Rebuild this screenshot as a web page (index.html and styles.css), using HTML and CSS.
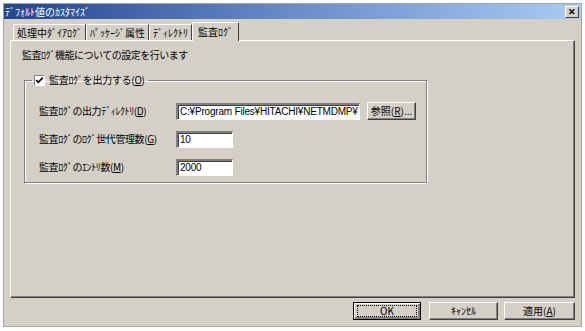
FILE: index.html
```html
<!DOCTYPE html>
<html lang="ja">
<head>
<meta charset="utf-8"/>
<title>ﾃﾞﾌｫﾙﾄ値のｶｽﾀﾏｲｽﾞ</title>
<link rel="stylesheet" href="styles.css">
</head>
<body>
<div class="window">
    <div class="titlebar">
        <span class="title">ﾃﾞﾌｫﾙﾄ値のｶｽﾀﾏｲｽﾞ</span>
        <span class="close">&#x2715;</span>
    </div>

    <div class="content">
        <div class="tabs">
            <div class="tab">処理中ﾀﾞｲｱﾛｸﾞ</div>
            <div class="tab">ﾊﾟｯｹｰｼﾞ属性</div>
            <div class="tab">ﾃﾞｨﾚｸﾄﾘ</div>
            <div class="tab active">監査ﾛｸﾞ</div>
        </div>

        <div class="panel">
            <div class="desc">監査ﾛｸﾞ機能についての設定を行います</div>

            <fieldset class="group">
                <legend>
                    <span class="check">
                        <svg width="9" height="9" viewBox="0 0 9 9"><path d="M1.2 4 L3.3 6.3 L7.8 1.6" stroke="#000" stroke-width="1.7" fill="none"/></svg>
                    </span>
                    <span class="legend-text">監査ﾛｸﾞを出力する(<u>O</u>)</span>
                </legend>
                <div class="rows">
                    <label>監査ﾛｸﾞの出力ﾃﾞｨﾚｸﾄﾘ(<u>D</u>)</label>
                    <div class="field">
                        <input class="input wide" type="text" value="C:¥Program Files¥HITACHI¥NETMDMP¥Audit" readonly>
                        <span class="btn browse">参照(<u>R</u>)...</span>
                    </div>

                    <label>監査ﾛｸﾞのﾛｸﾞ世代管理数(<u>G</u>)</label>
                    <div class="field"><input class="input short" type="text" value="10" readonly></div>

                    <label>監査ﾛｸﾞのｴﾝﾄﾘ数(<u>M</u>)</label>
                    <div class="field"><input class="input short" type="text" value="2000" readonly></div>
                </div>
            </fieldset>
        </div>

        <div class="buttons">
            <span class="btn default"><span class="focus">OK</span></span>
            <span class="btn cancel">ｷｬﾝｾﾙ</span>
            <span class="btn apply">適用(<u>A</u>)</span>
        </div>
    </div>
</div>
</body>
</html>
```

FILE: styles.css
```css
body {
    margin: 0;
    background: #fff;
    font-family: "Noto Sans CJK JP", "Liberation Sans", sans-serif;
    font-size: 10px;
    line-height: 12px;
    color: #000;
}
.window {
    margin: 3px;
    width: 577px;
    height: 322px;
    border: 1px solid #a8a49c;
    background: #d4d0c8;
    display: flex;
    flex-direction: column;
}
.titlebar {
    height: 15px;
    display: flex;
    align-items: center;
    justify-content: space-between;
    background: linear-gradient(to right, #24448c, #6a8cc8 50%, #a8ccf2);
    padding: 0 2px 0 1px;
}
.title {
    color: #fff;
    font-size: 10px;
}
.close {
    width: 12px;
    height: 10px;
    background: #d4d0c8;
    border-top: 1px solid #fff;
    border-left: 1px solid #fff;
    border-right: 1px solid #404040;
    border-bottom: 1px solid #404040;
    font-size: 9px;
    line-height: 10px;
    font-weight: bold;
    text-align: center;
}
.content {
    padding: 3px 6px 0 6px;
    display: flex;
    flex-direction: column;
}
.tabs {
    display: flex;
    align-items: flex-end;
    height: 18px;
    padding-left: 3px;
}
.tab {
    height: 15px;
    padding: 0 3px;
    border-top: 1px solid #fff;
    border-left: 1px solid #fff;
    border-right: 1px solid #404040;
    line-height: 15px;
    white-space: nowrap;
}
.tab.active {
    height: 18px;
    padding: 0 5px;
    line-height: 17px;
    background: #d4d0c8;
    margin-bottom: -1px;
    position: relative;
}
.panel {
    height: 258px;
    box-sizing: border-box;
    border-top: 1px solid #fff;
    border-left: 1px solid #fff;
    border-right: 1px solid #404040;
    border-bottom: 1px solid #404040;
    box-shadow: inset -1px -1px 0 #808080;
    padding: 7px 11px;
}
.desc {
    height: 14px;
    line-height: 14px;
    letter-spacing: -0.5px;
}
.group {
    margin: 12px 0 0 2px;
    width: 403px;
    padding: 0 0 6px 14px;
    border: 1px solid #808080;
    box-shadow: inset 1px 1px 0 #fff, 1px 1px 0 #fff;
    box-sizing: border-box;
}
.group legend {
    padding: 0 3px 0 2px;
    margin-left: -7px;
    display: flex;
    align-items: center;
    gap: 4px;
    line-height: 12px;
}
.legend-text {
    letter-spacing: -0.3px;
}
.check {
    width: 9px;
    height: 9px;
    background: #fff;
    border-top: 1px solid #808080;
    border-left: 1px solid #808080;
    border-right: 1px solid #fff;
    border-bottom: 1px solid #fff;
    display: flex;
}
.rows {
    display: grid;
    grid-template-columns: 137px auto;
    grid-auto-rows: 18px;
    row-gap: 10px;
    align-items: center;
    margin-top: 16px;
}
.rows label {
    white-space: nowrap;
    letter-spacing: -0.4px;
}
.field {
    display: flex;
    gap: 7px;
    align-items: center;
}
.input {
    height: 17px;
    box-sizing: border-box;
    margin: 0;
    background: #fff;
    border-top: 2px solid #808080;
    border-left: 2px solid #808080;
    border-right: 1px solid #fff;
    border-bottom: 1px solid #fff;
    box-shadow: inset 1px 1px 0 #404040;
    padding: 0 1px 0 2px;
    font-family: "Liberation Sans", sans-serif;
    font-size: 10px;
    letter-spacing: -0.2px;
    color: #000;
    outline: none;
}
.input.wide {
    width: 184px;
}
.input.short {
    width: 57px;
}
.btn {
    height: 16px;
    border-top: 1px solid #fff;
    border-left: 1px solid #fff;
    border-right: 1px solid #404040;
    border-bottom: 1px solid #404040;
    box-shadow: inset -1px -1px 0 #808080;
    display: flex;
    align-items: center;
    justify-content: center;
    white-space: nowrap;
    box-sizing: content-box;
}
.browse {
    width: 47px;
}
.buttons {
    display: flex;
    justify-content: flex-end;
    margin-top: 4px;
}
.buttons .default {
    width: 66px;
    border: 1px solid #000;
    box-shadow: inset 1px 1px 0 #fff, inset -2px -2px 0 #808080;
}
.buttons .cancel {
    width: 67px;
    margin-left: 8px;
}
.buttons .apply {
    width: 69px;
    margin-left: 6px;
}
.focus {
    width: 58px;
    height: 10px;
    border: 1px dotted #000;
    display: flex;
    align-items: center;
    justify-content: center;
}
```
